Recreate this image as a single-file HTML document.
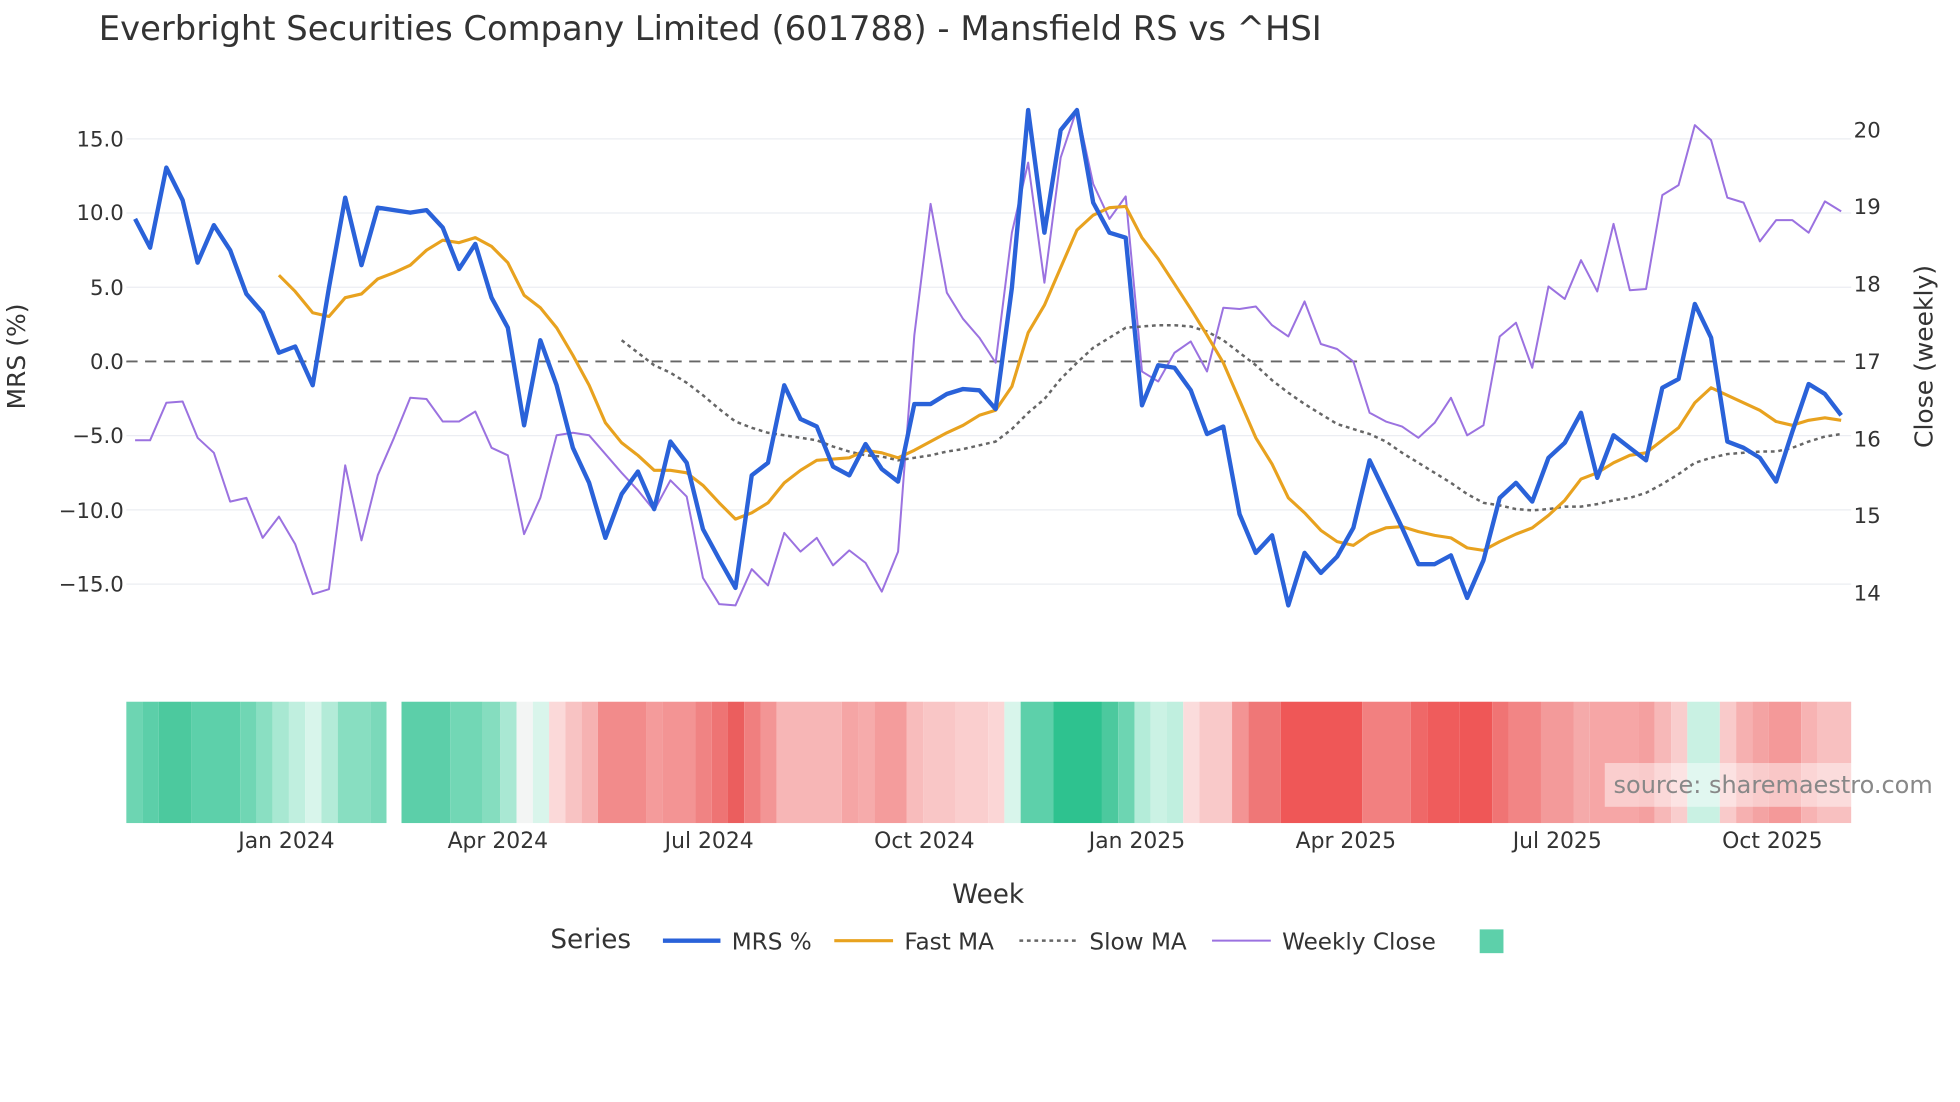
<!DOCTYPE html>
<html><head><meta charset="utf-8"><style>html,body{margin:0;padding:0;background:#fff}svg{display:block}text{font-family:"DejaVu Sans","Liberation Sans",sans-serif;fill:#333}</style></head><body>
<svg width="1960" height="1102" viewBox="0 0 1567 881" preserveAspectRatio="none" xmlns="http://www.w3.org/2000/svg">
<rect width="1567" height="881" fill="#fff"/>
<text x="79" y="32" font-size="27" style="fill:#333">Everbright Securities Company Limited (601788) - Mansfield RS vs ^HSI</text>
<g stroke="#ebedf2" stroke-width="1">
<line x1="101" x2="1480" y1="111" y2="111"/><line x1="101" x2="1480" y1="170.3" y2="170.3"/><line x1="101" x2="1480" y1="229.6" y2="229.6"/><line x1="101" x2="1480" y1="348.3" y2="348.3"/><line x1="101" x2="1480" y1="407.6" y2="407.6"/><line x1="101" x2="1480" y1="467" y2="467"/>
</g>
<line x1="101" x2="1480" y1="289" y2="289" stroke="#666" stroke-width="1.5" stroke-dasharray="9,6"/>
<g font-size="17" text-anchor="end">
<text x="99" y="117">15.0</text><text x="99" y="176">10.0</text><text x="99" y="236">5.0</text><text x="99" y="295">0.0</text><text x="99" y="354">−5.0</text><text x="99" y="414">−10.0</text><text x="99" y="473">−15.0</text>
</g>
<g font-size="17">
<text x="1482" y="110">20</text><text x="1482" y="171">19</text><text x="1482" y="233">18</text><text x="1482" y="295">17</text><text x="1482" y="357">16</text><text x="1482" y="418">15</text><text x="1482" y="480">14</text>
</g>
<text transform="translate(20,285) rotate(-90)" text-anchor="middle" font-size="20">MRS (%)</text>
<text transform="translate(1545,285) rotate(-90)" text-anchor="middle" font-size="20">Close (weekly)</text>
<polyline fill="none" stroke="#9b72e0" stroke-width="1.6" stroke-linejoin="round" points="108,352 120,352 133,322 146,321 158,350 171,362 184,401 197,398 210,430 223,413 236,435 250,475 263,471 276,372 289,432 302,380 315,350 328,318 341,319 354,337 367,337 380,329 393,358 406,364 419,427 432,398 445,348 458,346 471,348 484,363 497,378 510,392 523,408 536,384 549,397 562,462 575,483 588,484 601,455 614,468 627,426 640,441 653,430 666,452 679,440 692,450 705,473 718,441 731,268 744,163 757,234 770,255 783,270 796,290 809,186 822,130 835,226 848,126 861,87 874,147 887,175 900,157 913,297 926,305 939,282 952,273 965,297 978,246 991,247 1004,245 1017,260 1030,269 1043,241 1056,275 1069,279 1082,289 1095,330 1108,337 1121,341 1134,350 1147,338 1160,318 1173,348 1186,340 1199,269 1212,258 1225,294 1238,229 1251,239 1264,208 1277,233 1290,179 1303,232 1316,231 1329,156 1342,148 1355,100 1368,112 1381,158 1394,162 1407,193 1420,176 1433,176 1446,186 1459,161 1472,169"/>
<polyline fill="none" stroke="#666" stroke-width="2" stroke-dasharray="3,3" points="497,272 510,282 523,292 536,298 549,306 562,316 575,327 588,337 601,342 614,346 627,348 640,350 653,352 666,357 679,361 692,364 705,365 718,368 731,366 744,364 757,361 770,359 783,356 796,353 809,343 822,330 835,319 848,303 861,290 874,278 887,270 900,262 913,261 926,260 939,260 952,261 965,265 978,272 991,282 1004,292 1017,304 1030,314 1043,323 1056,331 1069,339 1082,343 1095,347 1108,353 1121,362 1134,370 1147,378 1160,386 1173,395 1186,402 1199,404 1212,407 1225,408 1238,407 1251,405 1264,405 1277,403 1290,400 1303,398 1316,394 1329,387 1342,379 1355,370 1368,366 1381,363 1394,362 1407,361 1420,361 1433,358 1446,353 1459,349 1472,347"/>
<polyline fill="none" stroke="#e8a21f" stroke-width="2.5" stroke-linejoin="round" points="223,220 236,233 250,250 263,253 276,238 289,235 302,223 315,218 328,212 341,200 354,192 367,194 380,190 393,197 406,210 419,236 432,246 445,262 458,284 471,308 484,338 497,354 510,364 523,376 536,376 549,378 562,388 575,402 588,415 601,410 614,402 627,386 640,376 653,368 666,367 679,366 692,360 705,362 718,366 731,360 744,353 757,346 770,340 783,332 796,328 809,309 822,266 835,244 848,214 861,184 874,172 887,166 900,165 913,190 926,207 939,227 952,247 965,268 978,290 991,320 1004,350 1017,371 1030,398 1043,410 1056,424 1069,433 1082,436 1095,427 1108,422 1121,421 1134,425 1147,428 1160,430 1173,438 1186,440 1199,433 1212,427 1225,422 1238,412 1251,400 1264,383 1277,378 1290,370 1303,364 1316,362 1329,352 1342,342 1355,322 1368,310 1381,316 1394,322 1407,328 1420,337 1433,340 1446,336 1459,334 1472,336"/>
<polyline fill="none" stroke="#2a62d9" stroke-width="3.5" stroke-linejoin="round" points="108,175 120,198 133,134 146,160 158,210 171,180 184,200 197,235 210,250 223,282 236,277 250,308 263,230 276,158 289,212 302,166 315,168 328,170 341,168 354,182 367,215 380,195 393,238 406,262 419,340 432,272 445,308 458,358 471,386 484,430 497,395 510,377 523,407 536,353 549,370 562,423 575,447 588,470 601,380 614,370 627,308 640,335 653,341 666,373 679,380 692,355 705,375 718,385 731,323 744,323 757,315 770,311 783,312 796,327 809,230 822,88 835,186 848,104 861,88 874,162 887,186 900,190 913,324 926,292 939,294 952,312 965,347 978,341 991,411 1004,442 1017,428 1030,484 1043,442 1056,458 1069,445 1082,422 1095,368 1108,395 1121,422 1134,451 1147,451 1160,444 1173,478 1186,448 1199,398 1212,386 1225,401 1238,366 1251,354 1264,330 1277,382 1290,348 1303,358 1316,368 1329,310 1342,303 1355,243 1368,270 1381,353 1394,358 1407,366 1420,385 1433,345 1446,307 1459,315 1472,332"/>
<g>
<rect x="101" y="561" width="13" height="97" fill="#6dd5b2"/><rect x="114" y="561" width="13" height="97" fill="#5ccfa9"/><rect x="127" y="561" width="26" height="97" fill="#4cc99e"/><rect x="153" y="561" width="39" height="97" fill="#5dd0aa"/><rect x="192" y="561" width="13" height="97" fill="#70d6b4"/><rect x="205" y="561" width="13" height="97" fill="#8adfc2"/><rect x="218" y="561" width="13" height="97" fill="#a8e8d2"/><rect x="231" y="561" width="13" height="97" fill="#c0efdf"/><rect x="244" y="561" width="13" height="97" fill="#d8f5eb"/><rect x="257" y="561" width="13" height="97" fill="#b3ebd8"/><rect x="270" y="561" width="26" height="97" fill="#88dec1"/><rect x="296" y="561" width="13" height="97" fill="#7bd9ba"/>
<rect x="321" y="561" width="39" height="97" fill="#5ccfa9"/><rect x="360" y="561" width="26" height="97" fill="#72d7b5"/><rect x="386" y="561" width="14" height="97" fill="#85ddbf"/><rect x="400" y="561" width="13" height="97" fill="#a9e8d3"/><rect x="413" y="561" width="13" height="97" fill="#f3f5f4"/><rect x="426" y="561" width="13" height="97" fill="#d9f5eb"/><rect x="439" y="561" width="13" height="97" fill="#fbd9d9"/><rect x="452" y="561" width="13" height="97" fill="#f8c3c3"/><rect x="465" y="561" width="13" height="97" fill="#f6b2b2"/><rect x="478" y="561" width="39" height="97" fill="#f28b8b"/><rect x="517" y="561" width="13" height="97" fill="#f49b9b"/><rect x="530" y="561" width="26" height="97" fill="#f39494"/><rect x="556" y="561" width="13" height="97" fill="#f08383"/><rect x="569" y="561" width="13" height="97" fill="#ee7474"/><rect x="582" y="561" width="13" height="97" fill="#eb5e5e"/><rect x="595" y="561" width="13" height="97" fill="#f07f7f"/><rect x="608" y="561" width="13" height="97" fill="#f39595"/><rect x="621" y="561" width="52" height="97" fill="#f7b6b6"/><rect x="673" y="561" width="13" height="97" fill="#f5a5a5"/><rect x="686" y="561" width="13" height="97" fill="#f6abab"/><rect x="699" y="561" width="26" height="97" fill="#f49c9c"/><rect x="725" y="561" width="13" height="97" fill="#f8bcbc"/><rect x="738" y="561" width="26" height="97" fill="#f9c6c6"/><rect x="764" y="561" width="26" height="97" fill="#facece"/><rect x="790" y="561" width="13" height="97" fill="#fbd6d6"/><rect x="803" y="561" width="13" height="97" fill="#d8f5eb"/><rect x="816" y="561" width="26" height="97" fill="#5dd0aa"/><rect x="842" y="561" width="39" height="97" fill="#2ec28f"/><rect x="881" y="561" width="13" height="97" fill="#4cc99e"/><rect x="894" y="561" width="13" height="97" fill="#6dd5b2"/><rect x="907" y="561" width="13" height="97" fill="#b4ecd9"/><rect x="920" y="561" width="13" height="97" fill="#cbf2e4"/><rect x="933" y="561" width="13" height="97" fill="#c0efdf"/><rect x="946" y="561" width="13" height="97" fill="#fbdcdc"/><rect x="959" y="561" width="26" height="97" fill="#f9c9c9"/><rect x="985" y="561" width="13" height="97" fill="#f39494"/><rect x="998" y="561" width="26" height="97" fill="#ef7777"/><rect x="1024" y="561" width="65" height="97" fill="#ef5757"/><rect x="1089" y="561" width="39" height="97" fill="#f28080"/><rect x="1128" y="561" width="13" height="97" fill="#ef6868"/><rect x="1141" y="561" width="26" height="97" fill="#ef5c5c"/><rect x="1167" y="561" width="26" height="97" fill="#ef5757"/><rect x="1193" y="561" width="13" height="97" fill="#f07474"/><rect x="1206" y="561" width="26" height="97" fill="#f28585"/><rect x="1232" y="561" width="26" height="97" fill="#f39a9a"/><rect x="1258" y="561" width="13" height="97" fill="#f5aaaa"/><rect x="1271" y="561" width="39" height="97" fill="#f6a6a6"/><rect x="1310" y="561" width="13" height="97" fill="#f4a0a0"/><rect x="1323" y="561" width="13" height="97" fill="#f7b8b8"/><rect x="1336" y="561" width="13" height="97" fill="#f9cdcd"/><rect x="1349" y="561" width="26" height="97" fill="#c9f1e3"/><rect x="1375" y="561" width="13" height="97" fill="#f9caca"/><rect x="1388" y="561" width="13" height="97" fill="#f6b0b0"/><rect x="1401" y="561" width="13" height="97" fill="#f4a3a3"/><rect x="1414" y="561" width="26" height="97" fill="#f49999"/><rect x="1440" y="561" width="13" height="97" fill="#f7b3b3"/><rect x="1453" y="561" width="27" height="97" fill="#f8c0c0"/>
</g>
<rect x="1283" y="610" width="265" height="35" fill="#fff" fill-opacity="0.45"/>
<text x="1290" y="634" font-size="19.2" style="fill:#888">source: sharemaestro.com</text>
<g font-size="17.5" text-anchor="middle">
<text x="229" y="678">Jan 2024</text><text x="398" y="678">Apr 2024</text><text x="567" y="678">Jul 2024</text><text x="739" y="678">Oct 2024</text><text x="909" y="678">Jan 2025</text><text x="1076" y="678">Apr 2025</text><text x="1245" y="678">Jul 2025</text><text x="1417" y="678">Oct 2025</text>
</g>
<text x="790" y="722" font-size="21" text-anchor="middle">Week</text>
<text x="440" y="758" font-size="21">Series</text>
<line x1="530" x2="576" y1="752" y2="752" stroke="#2a62d9" stroke-width="3.5"/>
<text x="585" y="759" font-size="18.5">MRS %</text>
<line x1="667" x2="714" y1="752" y2="752" stroke="#e8a21f" stroke-width="2.5"/>
<text x="723" y="759" font-size="18.5">Fast MA</text>
<line x1="815" x2="860" y1="752" y2="752" stroke="#666" stroke-width="2" stroke-dasharray="3,3"/>
<text x="871" y="759" font-size="18.5">Slow MA</text>
<line x1="969" x2="1016" y1="752" y2="752" stroke="#9b72e0" stroke-width="1.6"/>
<text x="1025" y="759" font-size="18.5">Weekly Close</text>
<rect x="1183" y="743" width="19" height="19" fill="#5dd0aa"/>
</svg>
</body></html>
